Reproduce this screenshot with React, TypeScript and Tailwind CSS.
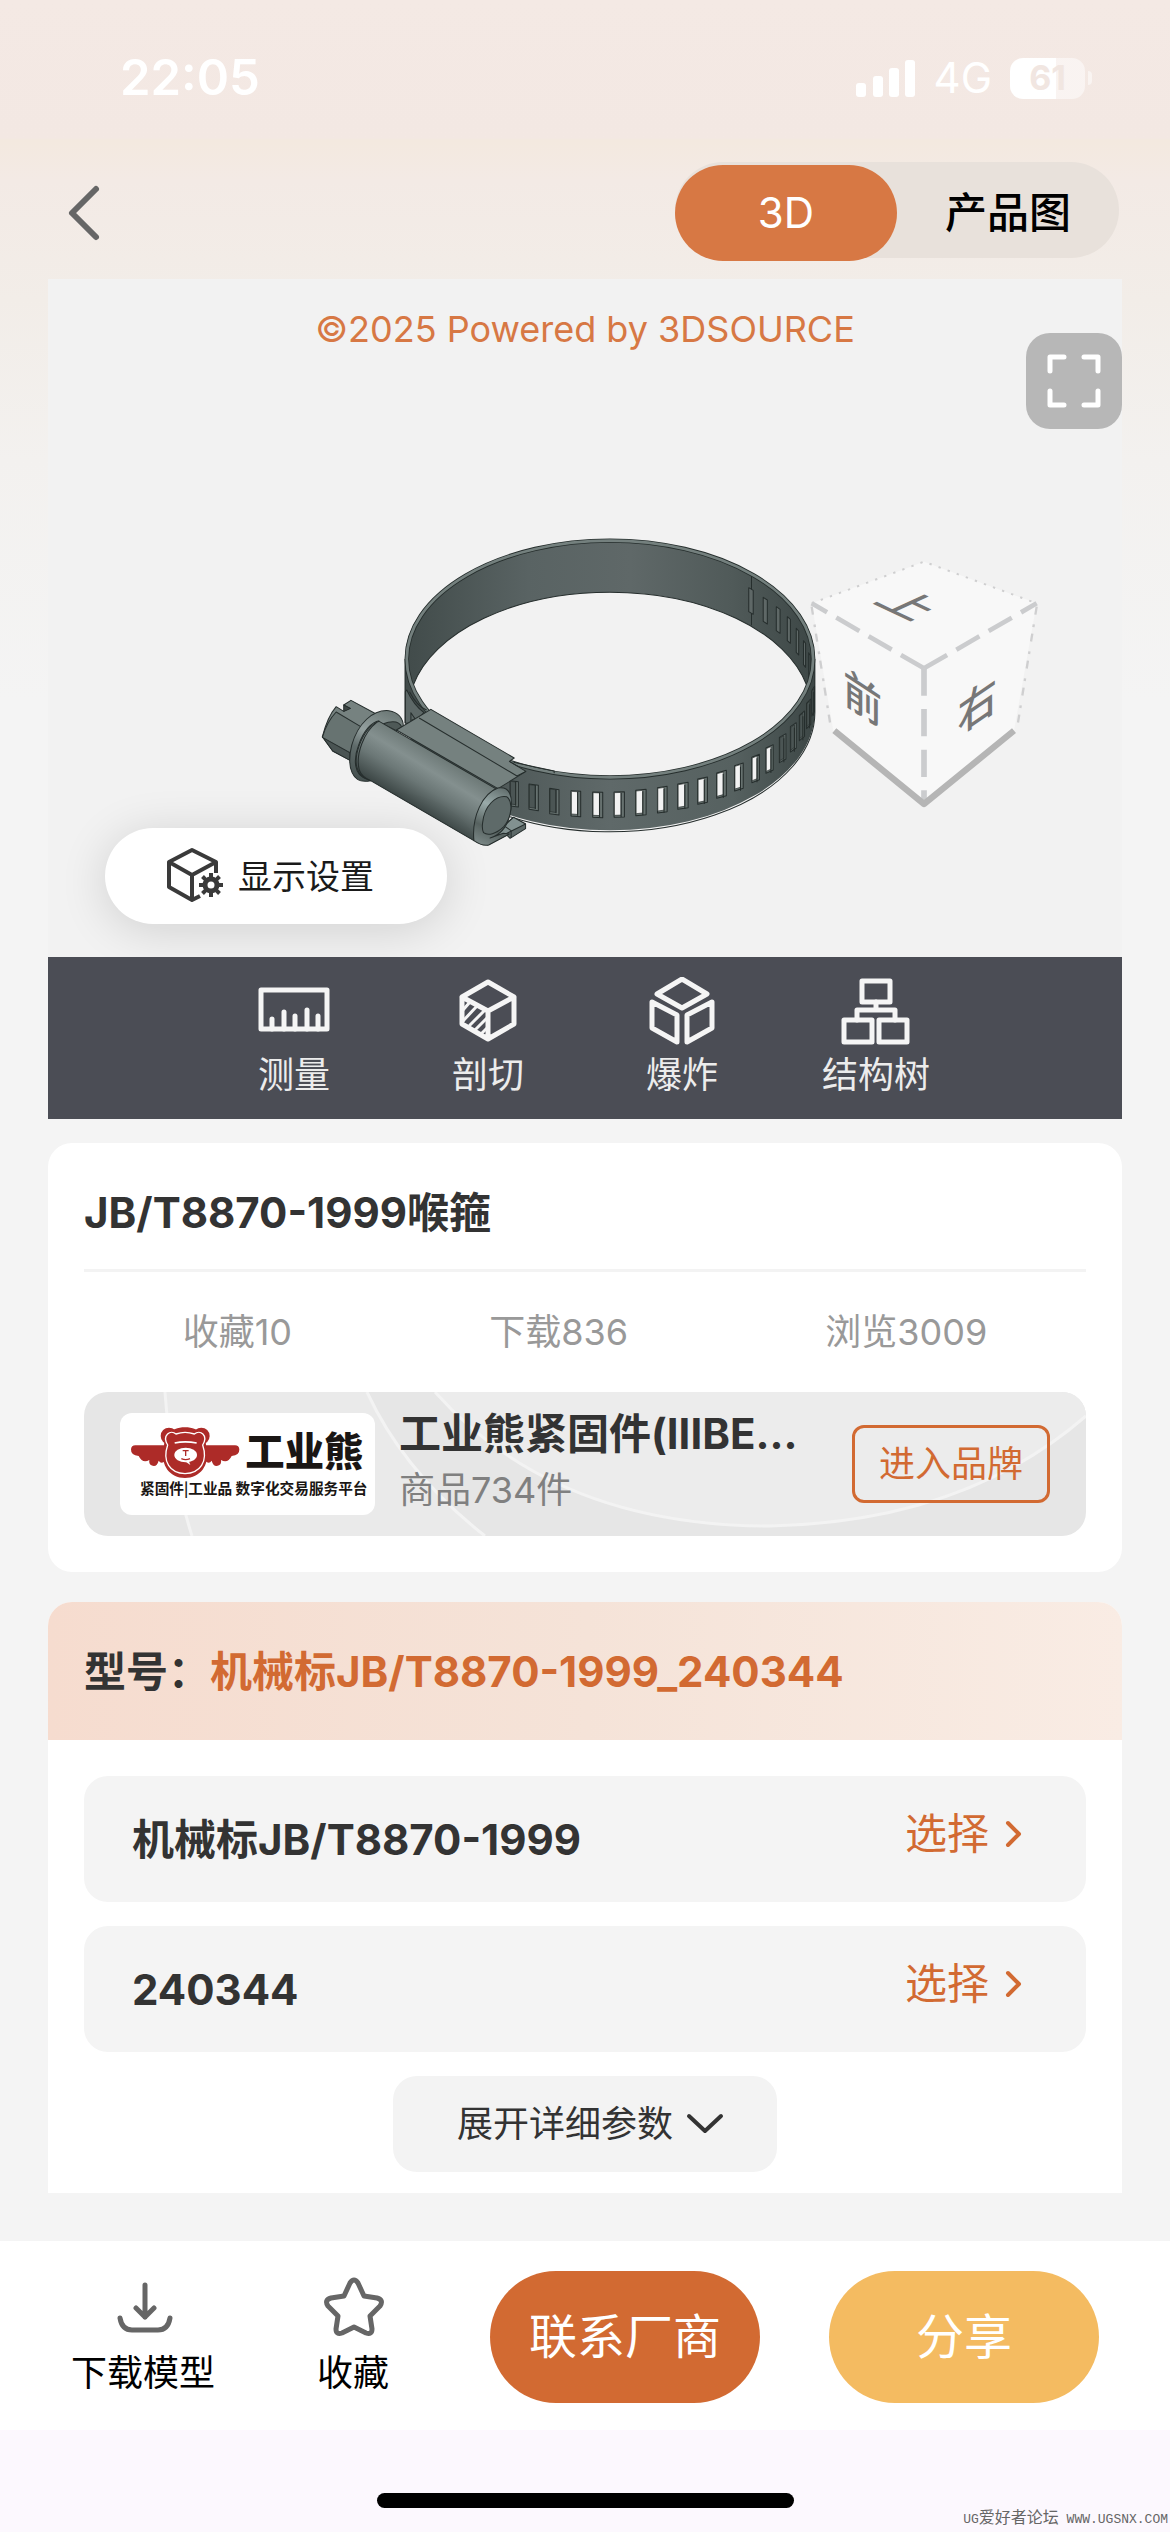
import React from "react";

const FONT = "font-['Inter','Noto_Sans_CJK_SC',sans-serif]";

function StatusBar() {
  return (
    <div className="flex h-[138px] items-start justify-between pt-[54px] pr-[78px] pl-[120px] text-white">
      <div className="text-[49px] leading-[48px] font-semibold">22:05</div>
      <div className="flex h-12 items-center gap-[18px]">
        <svg className="h-10 w-[60px]" viewBox="0 0 60 40" fill="currentColor" aria-hidden="true">
          <rect x="0" y="25" width="10" height="14" rx="3" />
          <rect x="17" y="18" width="10" height="21" rx="3" />
          <rect x="33" y="10" width="10" height="29" rx="3" />
          <rect x="49" y="2" width="10" height="37" rx="3" />
        </svg>
        <div className="text-[42px] leading-[48px]">4G</div>
        <div className="flex items-center gap-[3px]">
          <div className="flex h-[41px] w-[75px] items-center justify-center rounded-[13px] bg-linear-to-r from-white from-61% to-white/50 to-61% text-[34px] leading-10 font-bold text-[#f1e6e1]">
            61
          </div>
          <div className="h-3.5 w-1 rounded-r-full bg-white/50" />
        </div>
      </div>
    </div>
  );
}

function Header() {
  return (
    <header className="flex h-[141px] items-start justify-between pt-6 pr-[51px] pl-[60px]">
      <button type="button" aria-label="返回" className="flex h-[102px] w-12 items-center justify-center">
        <svg className="h-[60px] w-12" viewBox="0 0 48 60" fill="none" stroke="#666" strokeWidth="6" strokeLinecap="round" strokeLinejoin="round">
          <path d="M36 6 L12 30 L36 54" />
        </svg>
      </button>
      <div className="flex h-24 rounded-full bg-[#e8e1db] pt-[3px] text-[42px] leading-none">
        <button type="button" className="h-24 w-[222px] rounded-full bg-[#d77844] text-white">3D</button>
        <button type="button" className="h-24 w-[222px] rounded-full font-medium text-black">产品图</button>
      </div>
    </header>
  );
}

const backSlots = [
  [1303, 233, 13],
  [1345, 262, 12],
  [1383, 290, 11],
  [1415, 320, 9],
  [1441, 355, 7],
  [1462, 392, 6],
  [1477, 428, 4],
];

const frontSlots: [number, number, number, number, boolean][] = [
  [610, 812, 24, 3, false],
  [665, 822, 27, 4, false],
  [725, 835, 27, 4, false],
  [787, 842, 28, 2, true],
  [850, 846, 29, 1, true],
  [912, 846, 30, -1, true],
  [975, 841, 30, -3, true],
  [1038, 833, 28, -4, true],
  [1097, 822, 30, -5, true],
  [1155, 807, 28, -6, true],
  [1210, 789, 28, -8, true],
  [1262, 767, 25, -8, true],
  [1312, 742, 22, -9, true],
  [1353, 714, 21, -10, true],
  [1392, 682, 19, -11, false],
  [1424, 650, 17, -12, false],
  [1450, 616, 15, -13, false],
  [1471, 580, 12, -13, false],
  [1486, 542, 8, -13, false],
];

function Clamp() {
  return (
    <g stroke="#262e2d" strokeWidth="3" strokeLinejoin="round">
      <path
        fill="url(#bandInside)"
        stroke="none"
        d="M305 447 A595 358 0 0 1 1495 447 V603 L1471 525 A585 356 0 0 0 329 525 L305 603 Z"
      />
      <path d="M329 525 A585 356 0 0 1 1471 525" fill="none" />
      <path d="M1311 198 V346" />
      {backSlots.map(([x, y, w]) => (
        <path key={x} fill="#5f6867" d={`M${x} ${y} l${w} 8 v72 l${-w} -8 z`} />
      ))}
      <path
        fill="url(#bandOutside)"
        stroke="none"
        d="M305 447 A595 358 0 0 0 1495 447 V603 A595 358 0 0 1 305 603 Z"
      />
      <path d="M1495 603 A595 358 0 0 1 610 920 M305 447 V640 M1495 447 V603" fill="none" />
      {frontSlots.map(([x, y, w, s, open]) => (
        <g key={x}>
          <path fill="#66716f" d={`M${x} ${y} l${w} ${s} v76 l${-w} ${-s} z`} />
          <path
            fill={open ? "#f2f2f2" : "#4b5554"}
            strokeWidth="2"
            d={`M${x + 1} ${y + 2} l${w * 0.64} ${s * 0.64} v68 l${-w * 0.64} ${-s * 0.64} z`}
          />
          <path fill="none" d={`M${x + w * 0.68} ${y + 3} v72`} />
        </g>
      ))}
      <ellipse cx="900" cy="447" rx="590" ry="355" fill="none" strokeWidth="13" />
      <ellipse cx="900" cy="447" rx="590" ry="355" fill="none" stroke="#74807e" strokeWidth="8" />
      <path fill="#5d6867" d="M310 540 Q330 585 360 608 L330 640 L306 640 V545 Z" />
      <path fill="none" d="M318 545 Q340 590 368 600 M322 608 V632 L334 626 Z M620 757 L738 783 V790" />

      <path fill="#768280" d="M65 680 Q80 620 105 590 L127 604 L146 595 L127 585 L148 571 L232 618 L180 670 L145 750 L95 723 Z" />
      <path fill="#3c4544" d="M127 604 V585 L146 595 Z" />
      <path fill="#4a5453" d="M65 680 L145 728 V751 L95 723 Z" />
      <path fill="#677371" d="M105 606 L180 652 L145 728 L65 682 Q78 635 105 606 Z" />

      <path fill="url(#collar)" d="M205 812 C150 825 135 770 150 706 C168 640 212 598 258 602 C285 606 300 625 300 650 L230 700 Z" />
      <path fill="#4e5957" d="M240 642 Q285 625 296 652 L280 662 Z" />
      <path fill="none" d="M196 806 C155 800 155 745 170 706 C185 660 210 635 230 632" />

      <path fill="#75817f" d="M280 660 L380 598 L622 744 L608 754 L656 784 L575 836 Z" />
      <path fill="none" d="M346 624 L630 798 L656 784 M608 754 L634 770" />
      <path fill="url(#barrel)" d="M230 634 L568 836 C530 862 505 910 505 992 L205 812 C160 800 155 755 172 706 C186 668 208 642 230 634 Z" />
      <path fill="none" d="M222 638 C188 665 160 730 172 780 Q180 802 205 812" />

      <path fill="#5d6968" d="M545 1005 L600 975 L610 985 L655 956 V942 L620 922 L585 950 Z" />
      <path fill="#829190" d="M545 1000 L608 966 L655 942 L620 922 L590 950 Z" />
      <path d="M596 950 L613 962 V984" fill="none" />
      <path fill="url(#cap)" d="M505 992 C498 920 530 850 575 834 C610 828 618 860 612 900 C605 950 580 975 552 984 L590 970 L608 972 L548 1005 Q530 1010 505 992 Z" />
      <path fill="#5e6a69" d="M530 940 C535 885 570 855 600 860 C620 875 615 920 592 950 C570 972 545 978 533 968 Q528 958 530 940 Z" />
    </g>
  );
}

function ViewCube() {
  return (
    <g fill="none">
      <path fill="#f8f8f8" d="M432 65 L770 190 L702 572 L432 795 L160 572 L95 190 Z" />
      <path stroke="#cfcfd0" strokeWidth="6" strokeDasharray="7 22" d="M95 190 L432 65 L770 190" />
      <path stroke="#cfcfd0" strokeWidth="7" strokeDasharray="24 30 8 20" d="M95 200 L152 560 M770 200 L712 560" />
      <path stroke="#cbccce" strokeWidth="14" strokeDasharray="80 32" d="M432 385 L95 190 M432 385 L770 190" />
      <path stroke="#cbccce" strokeWidth="17" strokeDasharray="82 40" d="M432 385 V790" />
      <path stroke="#b5b5b5" strokeWidth="19" strokeLinejoin="round" d="M163 572 L432 792 L702 572" />
      <g fill="#777" fontSize="132" fontFamily="'Noto Sans CJK SC', sans-serif" fontWeight="500" textAnchor="middle">
        <text transform="matrix(0.95 0.45 -0.95 0.43 385 195)" y="48">上</text>
        <text transform="matrix(0.88 0.58 0 1 248 475)" y="48">前</text>
        <text transform="matrix(0.9 -0.62 0 1 592 497)" y="48">右</text>
      </g>
    </g>
  );
}

function Scene() {
  return (
    <svg className="absolute inset-0 h-full w-full" viewBox="0 0 1074 678" role="img" aria-label="喉箍三维模型">
      <defs>
        <linearGradient id="bandInside" x1="0" x2="1" y1="0" y2="0">
          <stop offset="0" stopColor="#414b4a" />
          <stop offset="0.3" stopColor="#596363" />
          <stop offset="0.55" stopColor="#5f6868" />
          <stop offset="0.8" stopColor="#505a59" />
          <stop offset="1" stopColor="#3d4746" />
        </linearGradient>
        <linearGradient id="bandOutside" x1="0" x2="1" y1="0" y2="0">
          <stop offset="0" stopColor="#414b4a" />
          <stop offset="0.5" stopColor="#5f6969" />
          <stop offset="0.8" stopColor="#566160" />
          <stop offset="1" stopColor="#3d4746" />
        </linearGradient>
        <linearGradient id="barrel" gradientUnits="userSpaceOnUse" x1="400" y1="735" x2="310" y2="878">
          <stop offset="0" stopColor="#6e7a78" />
          <stop offset="0.3" stopColor="#84908f" />
          <stop offset="0.6" stopColor="#6b7776" />
          <stop offset="1" stopColor="#3c4645" />
        </linearGradient>
        <linearGradient id="collar" gradientUnits="userSpaceOnUse" x1="240" y1="600" x2="150" y2="800">
          <stop offset="0" stopColor="#6f7b79" />
          <stop offset="0.35" stopColor="#94a09f" />
          <stop offset="0.6" stopColor="#5f6b6a" />
          <stop offset="1" stopColor="#465150" />
        </linearGradient>
        <linearGradient id="cap" gradientUnits="userSpaceOnUse" x1="590" y1="830" x2="510" y2="1000">
          <stop offset="0" stopColor="#5f6b6a" />
          <stop offset="0.35" stopColor="#9aabaa" />
          <stop offset="0.7" stopColor="#56615f" />
          <stop offset="1" stopColor="#7d8a89" />
        </linearGradient>
      </defs>
      <g transform="translate(732 261) scale(0.33333)">
        <ViewCube />
      </g>
      <g transform="translate(252 231) scale(0.34439 0.33333)">
        <Clamp />
      </g>
    </svg>
  );
}

function SettingsIcon() {
  return (
    <svg className="h-[60px] w-[60px]" viewBox="0 0 60 60" fill="none" stroke="#3a3a3a" strokeWidth="4" strokeLinejoin="round" aria-hidden="true">
      <path d="M50 27 V16 L26 4 L3 16 V41 L26 54 L34 50 M3 16 L26 29 L50 16 M26 29 V54" />
      <circle cx="45" cy="39" r="6" strokeWidth="5" />
      <path
        strokeWidth="4"
        d="M45 33 V27 M45 45 V51 M39 39 H33 M51 39 H57 M40.800 34.800 L36.500 30.500 M49.200 34.800 L53.500 30.500 M40.800 43.200 L36.500 47.500 M49.200 43.200 L53.500 47.500"
      />
    </svg>
  );
}

const tools = [
  {
    label: "测量",
    icon: (
      <>
        <rect x="3" y="13" width="66" height="39" />
        <path d="M14 52 V42 M26 52 V35 M37 52 V39 M49 52 V33 M60 52 V39" />
      </>
    ),
  },
  {
    label: "剖切",
    icon: (
      <>
        <path d="M36 5 L62 20 V47 L36 62 L10 47 V20 Z M10 20 L36 34 L62 20 M36 34 V62" />
        <path strokeWidth="3" d="M11 33 L18 25 M11 44 L25 29 M18 48 L33 33 M23 53 L36 40 M29 57 L36 50" />
      </>
    ),
  },
  {
    label: "爆炸",
    icon: (
      <>
        <path d="M36 2 L61 17 L36 31 L11 17 Z" />
        <path d="M6 25 L31 38 V65 L6 51 Z M66 25 L41 38 V65 L66 51 Z" />
      </>
    ),
  },
  {
    label: "结构树",
    icon: (
      <>
        <rect x="22" y="4" width="28" height="21" />
        <rect x="4" y="43" width="28" height="22" />
        <rect x="39" y="43" width="28" height="22" />
        <path d="M36 25 V33 M17 43 V33 H55 V43" />
      </>
    ),
  },
];

function Viewer() {
  return (
    <section className="bg-[#f2f2f2]">
      <div className="relative flex h-[678px] flex-col items-center">
        <Scene />
        <p className="pt-6 text-[36px] leading-[52px] text-[#d77844]">©2025 Powered by 3DSOURCE</p>
        <button
          type="button"
          aria-label="全屏"
          className="absolute top-[54px] right-0 flex h-24 w-24 items-center justify-center rounded-3xl bg-[#b7b7b7]"
        >
          <svg className="h-[54px] w-[54px]" viewBox="0 0 54 54" fill="none" stroke="#fff" strokeWidth="5" strokeLinecap="round" strokeLinejoin="round">
            <path d="M3 17 V3 H17 M37 3 H51 V17 M51 37 V51 H37 M17 51 H3 V37" />
          </svg>
        </button>
        <button
          type="button"
          className="absolute bottom-[33px] left-[57px] flex h-24 w-[342px] items-center justify-center gap-3 rounded-full bg-white pr-3 text-[34px] text-[#1a1a1a] shadow-[0_6px_48px_rgba(0,0,0,0.14)]"
        >
          <SettingsIcon />
          显示设置
        </button>
      </div>
      <div className="relative flex h-[162px] items-start justify-center bg-[#4b4d55] pt-5 text-[36px] leading-[52px] text-[#ececec]">
        {tools.map((tool) => (
          <button key={tool.label} type="button" className="flex w-[194px] flex-col items-center gap-1">
            <svg className="h-[68px] w-[72px]" viewBox="0 0 72 68" fill="none" stroke="#f5f5f5" strokeWidth="5" strokeLinejoin="round" strokeLinecap="round" aria-hidden="true">
              {tool.icon}
            </svg>
            {tool.label}
          </button>
        ))}
      </div>
    </section>
  );
}

function BrandLogo() {
  return (
    <svg className="h-[102px] w-[255px] shrink-0 rounded-xl bg-white" viewBox="60 69 765 306" role="img" aria-label="工业熊">
      <g fill="#ad2b28">
        <path d="M106 166 H196 V212 Q184 224 176 212 Q170 234 154 226 Q146 222 148 210 Q128 222 116 198 Q92 196 93 178 Q94 166 106 166 Z" />
        <path d="M405 166 H315 V212 Q327 224 335 212 Q341 234 357 226 Q365 222 363 210 Q383 222 395 198 Q419 196 418 178 Q417 166 405 166 Z" />
        <circle cx="207" cy="138" r="25" />
        <circle cx="304" cy="138" r="25" />
        <path d="M255 112 C300 112 322 140 318 180 C330 225 300 264 255 264 C210 264 180 225 193 180 C188 140 210 112 255 112 Z" />
      </g>
      <g fill="none" stroke="#fff" strokeWidth="4">
        <path d="M203 165 C185 135 212 118 228 132 Q255 122 283 132 C300 118 326 135 308 165 C325 215 300 250 255 251 C210 250 186 215 203 165 Z" />
        <path strokeWidth="5" d="M224 159 Q255 152 290 159" />
      </g>
      <ellipse cx="257" cy="195" rx="34" ry="22" fill="#fff" />
      <path d="M257 215 l14 10 l-6 -16 z" fill="#fff" />
      <path d="M248 182 H266 M257 182 V198 M244 206 Q257 212 270 206" stroke="#ad2b28" strokeWidth="4" fill="none" />
      <g fill="#1a1614" fontFamily="'Noto Sans CJK SC', sans-serif">
        <text x="436" y="228" fontSize="118" fontWeight="900">工业熊</text>
        <text x="120" y="313" fontSize="44" fontWeight="700">紧固件|工业品 数字化交易服务平台</text>
      </g>
    </svg>
  );
}

function ProductCard() {
  return (
    <section className="rounded-3xl bg-white px-9 pb-9 text-[36px] text-[#999]">
      <h1 className="flex h-[129px] items-center border-b-[3px] border-[#f3f3f3] pt-3 text-[42px] font-bold text-[#333]">
        JB/T8870-1999喉箍
      </h1>
      <div className="flex h-[120px] items-center justify-around">
        <span>收藏10</span>
        <span>下载836</span>
        <span>浏览3009</span>
      </div>
      <div className="relative flex h-36 items-center overflow-hidden rounded-3xl bg-[#e6e6e6] px-9">
        <svg className="absolute inset-0 h-full w-full" viewBox="0 0 1002 144" preserveAspectRatio="none" fill="none" aria-hidden="true">
          <path fill="#eaeaea" d="M81 0 Q86 74 108 144 H401 Q320 80 283 0 Z" />
          <path fill="#ececec" d="M351 0 Q470 134 686 134 Q880 130 1002 24 V0 Z" />
          <path stroke="#f3f3f3" strokeWidth="3" d="M81 0 Q86 74 108 144 M283 0 Q320 80 401 144 M351 0 Q470 134 686 134 Q880 130 1002 24" />
        </svg>
        <div className="relative flex w-full items-center">
          <BrandLogo />
          <div className="ml-6 flex-1 pb-1 leading-[56px] whitespace-nowrap">
            <h2 className="text-[42px] font-bold text-[#333]">工业熊紧固件(IIIBE...</h2>
            <p className="text-[36px] text-[#808080]">商品734件</p>
          </div>
          <button type="button" className="h-[78px] w-[198px] rounded-xl border-3 border-[#d26a32] text-[36px] leading-none text-[#d26a32]">
            进入品牌
          </button>
        </div>
      </div>
    </section>
  );
}

function OptionRow({ value }: { value: string }) {
  return (
    <div className="flex h-[126px] items-center justify-between rounded-3xl bg-[#f4f4f4] pr-[63px] pl-12">
      <span className="font-bold text-[#333]">{value}</span>
      <button type="button" className="flex items-center gap-4 pb-3 text-[#d26a32]">
        选择
        <svg className="h-7 w-[18px]" viewBox="0 0 18 28" fill="none" stroke="currentColor" strokeWidth="4" strokeLinecap="round" strokeLinejoin="round" aria-hidden="true">
          <path d="M3 4 L14 15 L3 26" />
        </svg>
      </button>
    </div>
  );
}

function ModelCard() {
  return (
    <section className="overflow-hidden rounded-t-3xl bg-white text-[42px]">
      <h2 className="flex h-[138px] items-center bg-linear-to-r from-[#f6dccf] via-[#f5e3d8] to-[#f9ece4] px-9 font-bold text-[#333]">
        型号：<span className="text-[#d26a32]">机械标JB/T8870-1999_240344</span>
      </h2>
      <div className="flex flex-col items-center px-9 pt-9 pb-[21px]">
        <div className="flex w-full flex-col gap-6">
          <OptionRow value="机械标JB/T8870-1999" />
          <OptionRow value="240344" />
        </div>
        <button type="button" className="mt-6 flex h-24 w-[384px] items-center justify-center gap-3 rounded-3xl bg-[#f3f3f3] pl-3 text-[36px] text-[#333]">
          展开详细参数
          <svg className="h-6 w-10" viewBox="0 0 40 24" fill="none" stroke="currentColor" strokeWidth="4" strokeLinecap="round" strokeLinejoin="round" aria-hidden="true">
            <path d="M4 4 L20 19 L36 4" />
          </svg>
        </button>
      </div>
    </section>
  );
}

function BottomBar() {
  return (
    <footer className="relative mt-auto bg-[#fcf8fe]">
      <div className="flex h-[189px] items-start justify-between bg-white pt-[30px] pr-[71px] pl-[71px] text-[36px] text-black">
        <div className="flex gap-[102px]">
          <button type="button" className="flex flex-col items-center gap-2 pt-1 leading-[52px]">
            <svg className="h-16 w-16" viewBox="0 0 64 64" fill="none" stroke="#666" strokeWidth="5" strokeLinecap="round" strokeLinejoin="round" aria-hidden="true">
              <path d="M34 10 V42 M25 33 L34 42 L43 33 M9 43 Q11 55 21 55 H47 Q57 55 59 43" />
            </svg>
            下载模型
          </button>
          <button type="button" className="flex flex-col items-center gap-2 pt-1 leading-[52px]">
            <svg className="h-16 w-16" viewBox="0 0 64 64" fill="none" stroke="#666" strokeWidth="5" strokeLinecap="round" strokeLinejoin="round" aria-hidden="true">
              <path d="M29 8 Q33 2 37 8 L43 21 L56 23 Q63 25 59 31 L49 41 L51 54 Q51 60 45 58 L33 52 L21 58 Q15 60 15 54 L17 41 L7 31 Q3 25 10 23 L23 21 Z" />
            </svg>
            收藏
          </button>
        </div>
        <div className="flex gap-[69px] text-[48px] leading-none text-white">
          <button type="button" className="h-[132px] w-[270px] rounded-full bg-[#d26a32]">联系厂商</button>
          <button type="button" className="h-[132px] w-[270px] rounded-full bg-[#f4bb61]">分享</button>
        </div>
      </div>
      <div className="flex h-[102px] items-end justify-center pb-6">
        <div className="h-[15px] w-[417px] rounded-full bg-black" />
      </div>
      <p className="absolute right-0.5 bottom-0 font-['Liberation_Mono','Noto_Sans_CJK_SC',monospace] text-[13px] leading-6 text-[#666]">
        UG<span className="text-[16px]">爱好者论坛</span> WWW.UGSNX.COM
      </p>
    </footer>
  );
}

export default function App() {
  return (
    <div className={`${FONT} flex min-h-screen flex-col bg-[#f5f5f5]`}>
      <div className="bg-[linear-gradient(180deg,#f4e9e4_0px,#f3e8e3_138px,#f3e9df_140px,#f3eae5_180px,#f2ede8_300px,#f3f1ef_460px,#f4f4f4_700px)]">
        <StatusBar />
        <Header />
        <main className="px-12 pb-12">
          <Viewer />
          <div className="mt-6">
            <ProductCard />
          </div>
          <div className="mt-[30px]">
            <ModelCard />
          </div>
        </main>
      </div>
      <BottomBar />
    </div>
  );
}
